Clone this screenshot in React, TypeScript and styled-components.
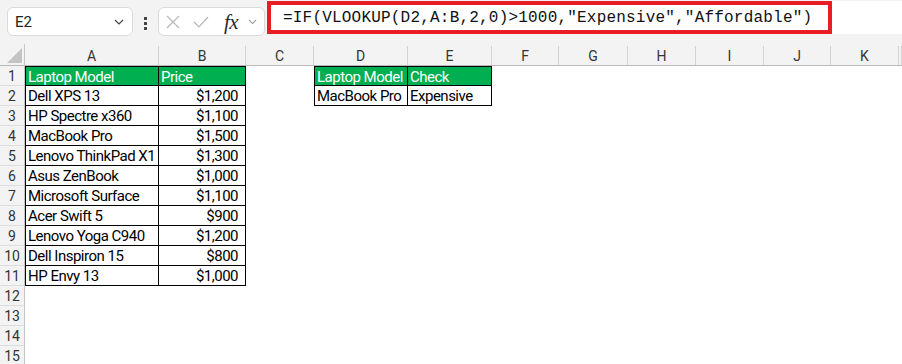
import styled, { createGlobalStyle } from "styled-components";

const GlobalStyle = createGlobalStyle`
  html, body {
    margin: 0;
    padding: 0;
    background: #fff;
  }
  body {
    font-family: Roboto, "Liberation Sans", sans-serif;
  }
`;

const Page = styled.div`
  display: flex;
  flex-direction: column;
  width: 902px;
  height: 364px;
  overflow: hidden;
  background: #fff;
`;

const FormulaBar = styled.div`
  display: flex;
  align-items: flex-start;
  height: 44px;
  flex-shrink: 0;
  background: #f3f3f3;
`;

const Box = styled.div`
  box-sizing: border-box;
  margin-top: 7px;
  height: 29px;
  display: flex;
  align-items: center;
  background: #fff;
  border: 1px solid #dadada;
  border-radius: 6px;
`;

const NameBox = styled(Box)`
  margin-left: 7px;
  width: 126px;
  justify-content: space-between;
  padding: 0 8px 0 7px;
  font-size: 15px;
  color: #222;
`;

const Dots = styled.div`
  width: 25px;
  display: flex;
  flex-direction: column;
  align-items: center;
  gap: 2px;
  padding-top: 17px;
`;

const Dot = styled.span`
  width: 3px;
  height: 3px;
  background: #444;
`;

const FuncBox = styled(Box)`
  width: 107px;
`;

const IconSlot = styled.span<{ $w: number }>`
  display: flex;
  align-items: center;
  justify-content: center;
  width: ${(p) => p.$w}px;
`;

const Fx = styled.span`
  font-family: "Liberation Serif", "DejaVu Serif", serif;
  font-style: italic;
  font-size: 21px;
  color: #2a2a2a;
  margin-left: 9px;
  width: 21px;
  letter-spacing: -0.5px;
  line-height: 20px;
`;

const FormulaArea = styled.div`
  flex: 1;
  margin: 1px 0 0 2px;
  height: 33px;
  background: #fff;
  display: flex;
`;

const Highlight = styled.div`
  box-sizing: border-box;
  width: 565px;
  height: 33px;
  border: 4px solid #e81d25;
  display: flex;
  align-items: center;
  padding-left: 12px;
  font-family: "Liberation Mono", "DejaVu Sans Mono", monospace;
  font-size: 16px;
  letter-spacing: 0.2px;
  color: #111;
  white-space: nowrap;
`;

const Sheet = styled.div`
  display: grid;
  grid-template-columns: 25px 134px 87px 68px 94px 84px 67px 69px 68px 68px 67px 68px 1fr;
  grid-template-rows: 22px;
  grid-auto-rows: 20px;
  background: #fff;
`;

const Corner = styled.div`
  box-sizing: border-box;
  background: #f3f3f3;
  border-right: 1px solid #c6c6c6;
  border-bottom: 1px solid #b9b9b9;
  display: flex;
  align-items: flex-end;
  justify-content: flex-end;
  padding: 0 2px 2px 0;
`;

const ColHead = styled.div`
  box-sizing: border-box;
  background: #f3f3f3;
  border-bottom: 1px solid #b9b9b9;
  display: flex;
  align-items: flex-end;
  padding-top: 2px;
`;

const ColLabel = styled.div`
  box-sizing: border-box;
  flex: 1;
  height: 100%;
  border-right: 1px solid #d4d4d4;
  display: flex;
  align-items: center;
  justify-content: center;
  font-size: 14px;
  color: #333;
`;

const RowHead = styled.div`
  box-sizing: border-box;
  background: #f3f3f3;
  border-right: 1px solid #c6c6c6;
  border-bottom: 1px solid #dcdcdc;
  display: flex;
  align-items: center;
  justify-content: center;
  font-size: 14px;
  color: #333;
`;

const Cell = styled.div<{
  $fill?: boolean;
  $boxed?: boolean;
  $top?: boolean;
  $left?: boolean;
  $num?: boolean;
}>`
  box-sizing: border-box;
  font-size: 15px;
  letter-spacing: -0.5px;
  line-height: 19px;
  white-space: nowrap;
  padding: 1px ${(p) => (p.$num ? "7px" : "0")} 0 2px;
  text-align: ${(p) => (p.$num ? "right" : "left")};
  background: ${(p) => (p.$fill ? "#00b050" : "#fff")};
  color: ${(p) => (p.$fill ? "#fff" : "#000")};
  border-right: ${(p) => (p.$boxed ? "1px solid #000" : "none")};
  border-bottom: ${(p) => (p.$boxed ? "1px solid #000" : "none")};
  border-top: ${(p) => (p.$top ? "1px solid #000" : "none")};
  border-left: ${(p) => (p.$left ? "1px solid #000" : "none")};
`;

const columns = ["A", "B", "C", "D", "E", "F", "G", "H", "I", "J", "K", ""];

const laptops: [string, string][] = [
  ["Laptop Model", "Price"],
  ["Dell XPS 13", "$1,200"],
  ["HP Spectre x360", "$1,100"],
  ["MacBook Pro", "$1,500"],
  ["Lenovo ThinkPad X1", "$1,300"],
  ["Asus ZenBook", "$1,000"],
  ["Microsoft Surface", "$1,100"],
  ["Acer Swift 5", "$900"],
  ["Lenovo Yoga C940", "$1,200"],
  ["Dell Inspiron 15", "$800"],
  ["HP Envy 13", "$1,000"],
];

const lookup: [string, string][] = [
  ["Laptop Model", "Check"],
  ["MacBook Pro", "Expensive"],
];

interface CellInfo {
  text: string;
  fill?: boolean;
  boxed?: boolean;
  top?: boolean;
  left?: boolean;
  num?: boolean;
}

const cellAt = (row: number, col: number): CellInfo => {
  const r = row - 1;
  if (r < laptops.length && (col === 0 || col === 1)) {
    return {
      text: laptops[r][col],
      fill: r === 0,
      boxed: true,
      top: r === 0,
      left: col === 0,
      num: r > 0 && col === 1,
    };
  }
  if (r < lookup.length && (col === 3 || col === 4)) {
    return {
      text: lookup[r][col - 3],
      fill: r === 0,
      boxed: true,
      top: r === 0,
      left: col === 3,
    };
  }
  return { text: "" };
};

const Chevron = ({ color, w }: { color: string; w: number }) => (
  <svg width={w} height={w / 2 + 1} viewBox="0 0 10 6" fill="none">
    <path d="M1 1l4 4 4-4" stroke={color} strokeWidth="1.2" />
  </svg>
);

const App = () => {
  const rows = Array.from({ length: 15 }, (_, i) => i + 1);

  return (
    <Page>
      <GlobalStyle />
      <FormulaBar>
        <NameBox>
          <span>E2</span>
          <Chevron color="#444" w={10} />
        </NameBox>
        <Dots>
          <Dot />
          <Dot />
          <Dot />
        </Dots>
        <FuncBox>
          <IconSlot $w={28}>
            <svg width="14" height="14" viewBox="0 0 14 14">
              <path d="M1 1l12 12M13 1L1 13" stroke="#b8b8b8" strokeWidth="1.2" />
            </svg>
          </IconSlot>
          <IconSlot $w={28}>
            <svg width="16" height="12" viewBox="0 0 16 12" fill="none">
              <path d="M1 6l5 5L15 1" stroke="#b8b8b8" strokeWidth="1.2" />
            </svg>
          </IconSlot>
          <Fx>fx</Fx>
          <IconSlot $w={14}>
            <Chevron color="#999" w={9} />
          </IconSlot>
        </FuncBox>
        <FormulaArea>
          <Highlight>=IF(VLOOKUP(D2,A:B,2,0)&gt;1000,"Expensive","Affordable")</Highlight>
        </FormulaArea>
      </FormulaBar>
      <Sheet>
        <Corner>
          <svg width="15" height="15" viewBox="0 0 15 15">
            <polygon points="15,0 15,15 0,15" fill="#c4c4c4" />
          </svg>
        </Corner>
        {columns.map((c, i) => (
          <ColHead key={i}>
            <ColLabel>{c}</ColLabel>
          </ColHead>
        ))}
        {rows.map((row) => [
          <RowHead key={`h${row}`}>{row}</RowHead>,
          ...columns.map((_, col) => {
            const info = cellAt(row, col);
            return (
              <Cell
                key={`${row}-${col}`}
                $fill={info.fill}
                $boxed={info.boxed}
                $top={info.top}
                $left={info.left}
                $num={info.num}
              >
                {info.text}
              </Cell>
            );
          }),
        ])}
      </Sheet>
    </Page>
  );
};

export default App;
